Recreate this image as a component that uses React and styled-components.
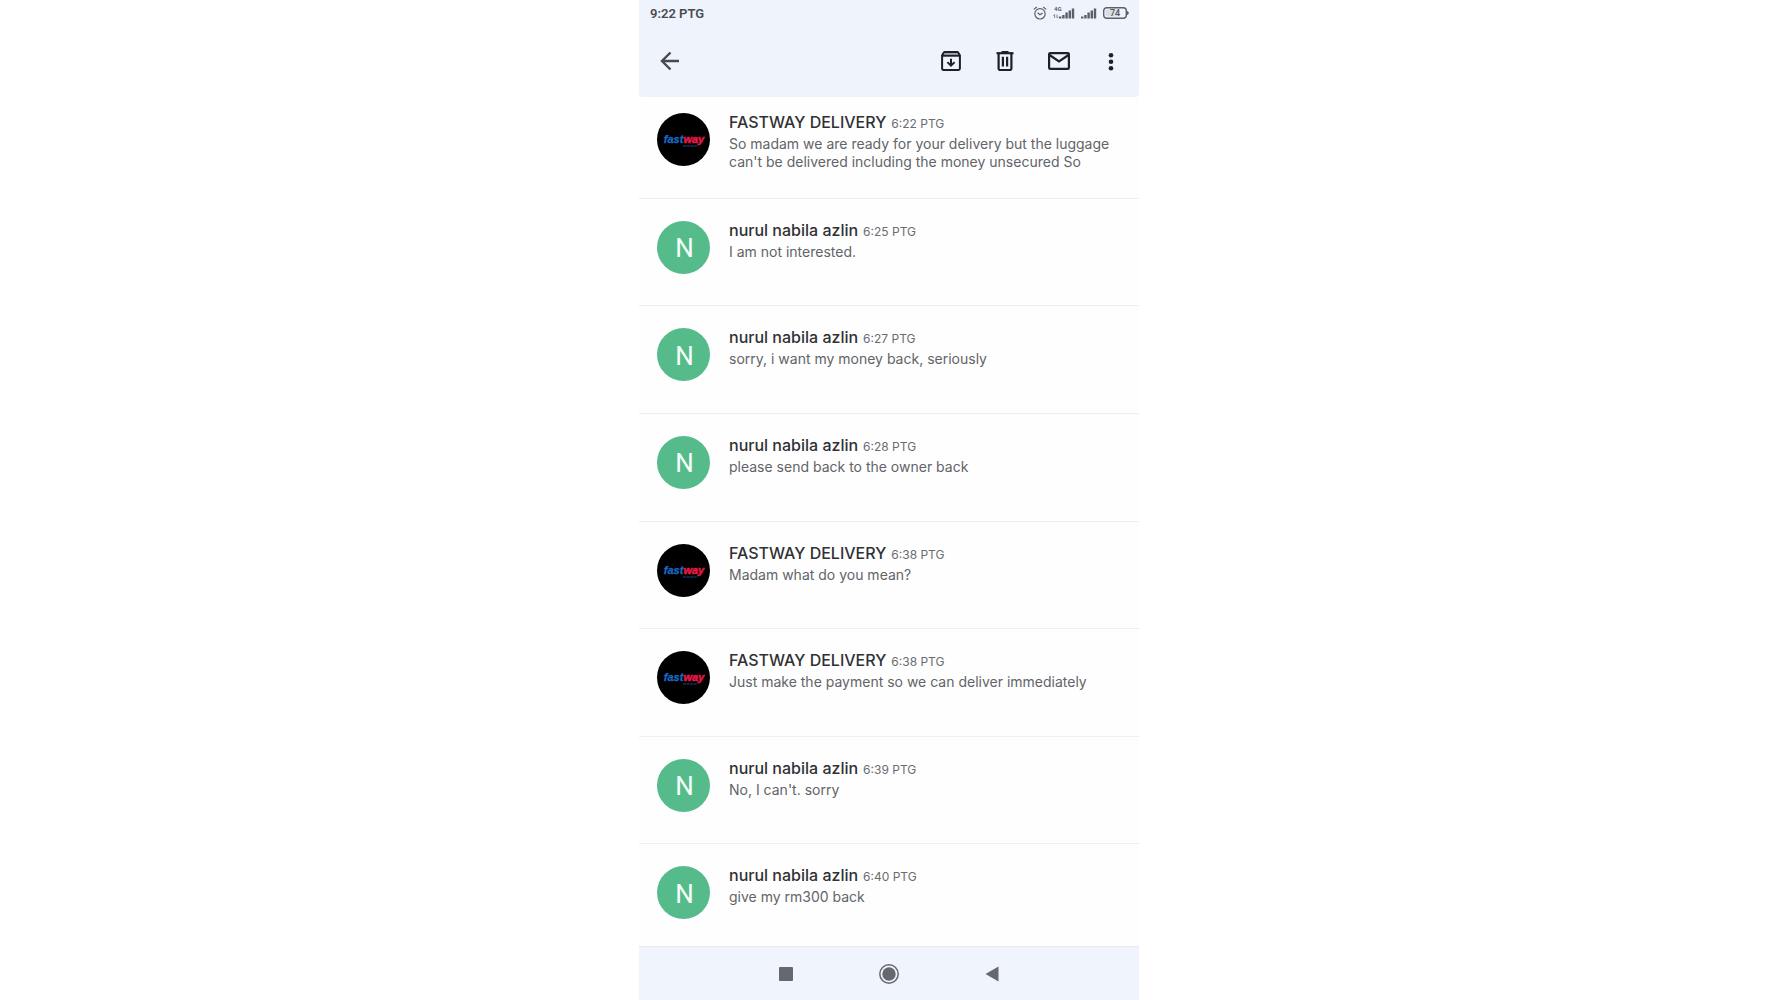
import { useState } from "react";
import styled, { createGlobalStyle } from "styled-components";

const GlobalStyle = createGlobalStyle`
  * {
    box-sizing: border-box;
  }

  body {
    margin: 0;
    background-color: #ffffff;
    font-family: Inter, "Liberation Sans", sans-serif;
  }
`

const Phone = styled.div`
  display: flex;
  flex-direction: column;
  width: 100%;
  max-width: 500px;
  min-height: 100vh;
  margin: 0 auto;
  background-color: #fefefe;
`

const Header = styled.header`
  background-color: #eff4fc;
  border-radius: 0 0 4px 4px;
`

const StatusBar = styled.div`
  display: flex;
  align-items: center;
  justify-content: space-between;
  height: 26px;
  padding: 0 10px 0 11px;
  color: #484b50;
  font-family: Roboto, sans-serif;
  font-size: 13px;
  font-weight: 600;
`

const StatusIcons = styled.div`
  display: flex;
  align-items: center;
  gap: 6px;

  svg {
    display: block;
  }
`

const Toolbar = styled.div`
  display: flex;
  align-items: flex-start;
  justify-content: space-between;
  height: 71px;
  padding: 11px 3px 0 4px;
`

const Actions = styled.div`
  display: flex;
`

const IconButton = styled.button`
  display: flex;
  align-items: center;
  justify-content: center;
  width: ${props => props.$narrow ? '50px' : '54px'};
  height: 48px;
  padding: 0;
  border: none;
  background: none;
  color: ${props => props.$soft ? '#46494e' : '#1d2024'};
  cursor: pointer;
`

const List = styled.ul`
  display: flex;
  flex-direction: column;
  flex: 1;
  margin: 0;
  padding: 0;
  list-style: none;
`

const Row = styled.li`
  display: flex;
  align-items: flex-start;
  flex: 1 0 107px;
  gap: 19px;
  padding: 22px 22px 0 18px;
  border-bottom: 1px solid #eeeff0;

  &:first-child {
    flex-basis: 101px;
    padding-top: 16px;
  }

  &:last-child {
    flex-basis: 101px;
    border-bottom: none;
  }
`

const Avatar = styled.div`
  display: flex;
  align-items: center;
  justify-content: center;
  flex: none;
  width: 53px;
  height: 53px;
  border-radius: 50%;
  overflow: hidden;
  background-color: ${props => props.$dark ? '#000000' : '#56bb8b'};
  color: #f4fff9;
  font-family: Roboto, sans-serif;
  font-size: 26px;
  line-height: 32px;
`

const Initial = styled.span`
  padding: 2px 0 0 2px;
`

const Content = styled.div`
  flex: 1;
  min-width: 0;
`

const Title = styled.div`
  display: flex;
  align-items: baseline;
  gap: 5px;
  height: 22px;
  line-height: 18px;
`

const Name = styled.span`
  color: #303134;
  font-size: 16px;
  font-weight: 500;
`

const Time = styled.time`
  color: #6a6c70;
  font-size: 12px;
`

const Text = styled.p`
  margin: 0;
  color: #626468;
  font-size: 14px;
  line-height: 18px;
`

const NavBar = styled.nav`
  display: flex;
  align-items: center;
  justify-content: center;
  gap: 49px;
  height: 54px;
  border-top: 1px solid #e6e8ee;
  background-color: #f0f4fc;
`

const messages = [
  { id: 1, from: 'fastway', time: '6:22 PTG', text: "So madam we are ready for your delivery but the luggage can't be delivered including the money unsecured So" },
  { id: 2, from: 'nurul', time: '6:25 PTG', text: 'I am not interested.' },
  { id: 3, from: 'nurul', time: '6:27 PTG', text: 'sorry, i want my money back, seriously' },
  { id: 4, from: 'nurul', time: '6:28 PTG', text: 'please send back to the owner back' },
  { id: 5, from: 'fastway', time: '6:38 PTG', text: 'Madam what do you mean?' },
  { id: 6, from: 'fastway', time: '6:38 PTG', text: 'Just make the payment so we can deliver immediately' },
  { id: 7, from: 'nurul', time: '6:39 PTG', text: "No, I can't. sorry" },
  { id: 8, from: 'nurul', time: '6:40 PTG', text: 'give my rm300 back' },
]

const names = {
  fastway: 'FASTWAY DELIVERY',
  nurul: 'nurul nabila azlin',
}

function AlarmIcon() {
  return (
    <svg width="14" height="14" viewBox="0 0 14 14" fill="none" stroke="#5c5f64" strokeWidth="1.2">
      <circle cx="7" cy="7.8" r="5.2" />
      <path d="M.8 3.4 3.8 1M13.2 3.4 10.2 1M4.6 6.8 7 8.8l2.6-1.9" />
    </svg>
  )
}

function Bars({ x }) {
  return (
    <g fill="#5c5f64">
      <rect x={x} y="10.5" width="2.4" height="2" />
      <rect x={x + 3.2} y="9" width="2.4" height="3.5" />
      <rect x={x + 6.4} y="6.5" width="2.4" height="6" />
      <rect x={x + 9.6} y="4.5" width="2.4" height="8" />
      <rect x={x + 12.8} y="2.5" width="2.4" height="10" />
    </g>
  )
}

function MobileSignal() {
  return (
    <svg width="22" height="14" viewBox="0 0 22 14">
      <text x="1" y="5" fontSize="6" fontWeight="700" fill="#5c5f64">4G</text>
      <path d="M1.6 12V8.6M.4 9.8l1.2-1.2M4 8.6V12M5.2 10.8 4 12" stroke="#777a80" strokeWidth=".9" fill="none" />
      <Bars x={6} />
    </svg>
  )
}

function Signal() {
  return (
    <svg width="16" height="14" viewBox="0 0 16 14">
      <Bars x={0} />
    </svg>
  )
}

function Battery() {
  return (
    <svg width="26" height="12" viewBox="0 0 26 12">
      <rect x=".7" y=".7" width="22.6" height="10.6" rx="3" fill="none" stroke="#5c5f64" strokeWidth="1.4" />
      <rect x="2.5" y="2.5" width="14" height="7" rx="1" fill="#d9dde4" />
      <path d="M24 4v4c1.2-.2 1.8-1 1.8-2S25.200 4.200 24 4z" fill="#5c5f64" />
      <text x="12" y="9" textAnchor="middle" fontSize="9" fontWeight="500" fill="#54575c">74</text>
    </svg>
  )
}

function BackIcon() {
  return (
    <svg width="20" height="20" viewBox="0 0 20 20" fill="none" stroke="currentColor" strokeWidth="2.4">
      <path d="M19 10H2.5M10.500 1.500 2 10l8.500 8.500" />
    </svg>
  )
}

function ArchiveIcon() {
  return (
    <svg width="20" height="20" viewBox="0 0 20 20" fill="none" stroke="currentColor" strokeWidth="2">
      <path d="M1.1 4.4 3.2 1.1h13.6l2.1 3.3v13.1q0 1.4-1.4 1.4h-15q-1.4 0-1.4-1.4z" strokeLinejoin="round" />
      <path d="M1.5 4.7h17" />
      <path d="M3 3h14" stroke="#80848a" strokeWidth="1.4" />
      <path d="M10 7.8v6M6.400 11.100l3.600 3.600 3.600-3.600" />
    </svg>
  )
}

function TrashIcon() {
  return (
    <svg width="18" height="20" viewBox="0 0 18 20" fill="none" stroke="currentColor" strokeWidth="2.2">
      <path d="M.5 2.2h17" />
      <path d="M5.500 1h7" />
      <path d="M2.6 2.5v15.1q0 1.4 1.4 1.4h10q1.4 0 1.4-1.4V2.5" />
      <path d="M6.900 5.800v9.700M11.100 5.800v9.700" />
    </svg>
  )
}

function MailIcon() {
  return (
    <svg width="22" height="18" viewBox="0 0 22 18" fill="none" stroke="currentColor" strokeWidth="2.2">
      <rect x="1.1" y="1.1" width="19.8" height="15.8" rx="1.2" />
      <path d="M1.5 3 11 9.5 20.5 3" />
    </svg>
  )
}

function MoreIcon() {
  return (
    <svg width="6" height="20" viewBox="0 0 6 20" fill="currentColor">
      <circle cx="3" cy="4.2" r="2.3" />
      <circle cx="3" cy="10.7" r="2.3" />
      <circle cx="3" cy="17.2" r="2.3" />
    </svg>
  )
}

function FastwayLogo() {
  return (
    <svg width="53" height="53" viewBox="0 0 53 53" fontFamily="Liberation Sans, sans-serif" fontStyle="italic" fontWeight="700">
      <text x="27" y="30" textAnchor="middle" fontSize="11">
        <tspan fill="#1c68c0" stroke="#1c68c0" strokeWidth=".3">fast</tspan>
        <tspan fill="#e8194b" stroke="#e8194b" strokeWidth=".5">way</tspan>
      </text>
      <path d="M26 33h14" stroke="#1d4a94" strokeWidth="1.2" strokeDasharray="3 .6" />
    </svg>
  )
}

function Message({ message }) {
  const isFastway = message.from === 'fastway'

  return (
    <Row>
      <Avatar $dark={isFastway}>{isFastway ? <FastwayLogo /> : <Initial>N</Initial>}</Avatar>
      <Content>
        <Title>
          <Name>{names[message.from]}</Name>
          <Time>{message.time}</Time>
        </Title>
        <Text>{message.text}</Text>
      </Content>
    </Row>
  )
}

export default function App() {
  const [list] = useState(messages)

  return (
    <>
      <GlobalStyle />
      <Phone>
        <Header>
          <StatusBar>
            <span>9:22 PTG</span>
            <StatusIcons>
              <AlarmIcon />
              <MobileSignal />
              <Signal />
              <Battery />
            </StatusIcons>
          </StatusBar>
          <Toolbar>
            <IconButton $soft aria-label="Back"><BackIcon /></IconButton>
            <Actions>
              <IconButton aria-label="Archive"><ArchiveIcon /></IconButton>
              <IconButton aria-label="Delete"><TrashIcon /></IconButton>
              <IconButton aria-label="Mark as unread"><MailIcon /></IconButton>
              <IconButton $narrow aria-label="More options"><MoreIcon /></IconButton>
            </Actions>
          </Toolbar>
        </Header>

        <List>
          {list.map(message => <Message key={message.id} message={message} />)}
        </List>

        <NavBar>
          <IconButton aria-label="Recent apps">
            <svg width="14" height="14" viewBox="0 0 14 14"><rect width="14" height="14" rx="1" fill="#65686d" /></svg>
          </IconButton>
          <IconButton aria-label="Home">
            <svg width="20" height="20" viewBox="0 0 20 20">
              <circle cx="10" cy="10" r="9.2" fill="none" stroke="#65686d" strokeWidth="1.5" />
              <circle cx="10" cy="10" r="6.7" fill="#65686d" />
            </svg>
          </IconButton>
          <IconButton aria-label="Go back">
            <svg width="14" height="16" viewBox="0 0 14 16"><path d="M13.500.5v15L.5 8z" fill="#65686d" /></svg>
          </IconButton>
        </NavBar>
      </Phone>
    </>
  )
}
